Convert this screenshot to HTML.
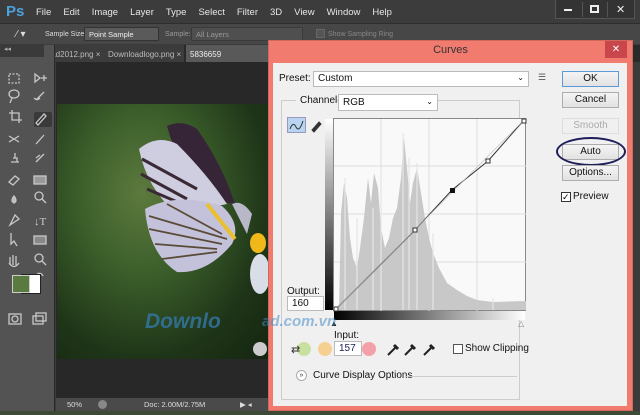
<!DOCTYPE html>
<html><head><style>
*{margin:0;padding:0;box-sizing:border-box}
body{width:640px;height:415px;overflow:hidden;background:#3b3b3b;font-family:"Liberation Sans",sans-serif;position:relative;font-size:9px;color:#ddd}
.a{position:absolute;white-space:nowrap}
.menu span{margin-right:12px;font-size:9.5px;color:#e6e6e6}
.btn{position:absolute;left:562px;width:57px;height:16px;border:1px solid #adadad;background:linear-gradient(#f4f4f4,#e2e2e2);font-size:10px;color:#111;text-align:center;line-height:14px}
</style></head><body>
<div class="a" style="left:0;top:0;width:640px;height:22px;background:#3c3c3c"></div>
<div class="a" style="left:6px;top:3px;font-size:15px;font-weight:bold;color:#4aa3dd">Ps</div>
<div class="a menu" style="left:36px;top:7px"><span>File</span><span>Edit</span><span>Image</span><span>Layer</span><span>Type</span><span>Select</span><span>Filter</span><span>3D</span><span>View</span><span>Window</span><span>Help</span></div>
<div class="a" style="left:555px;top:0;width:80px;height:19px;background:#333;border:1px solid #555;border-top:none"></div>
<div class="a" style="left:582px;top:2px;width:1px;height:15px;background:#555"></div>
<div class="a" style="left:607px;top:2px;width:1px;height:15px;background:#555"></div>
<div class="a" style="left:564px;top:9px;width:8px;height:2px;background:#eee"></div>
<div class="a" style="left:590px;top:5px;width:9px;height:8px;border:2px solid #eee"></div>
<div class="a" style="left:616px;top:3px;font-size:11px;color:#eee">✕</div>
<div class="a" style="left:0;top:23px;width:640px;height:21px;background:#474747;border-top:1px solid #2e2e2e"></div>
<div class="a" style="left:16px;top:29px;color:#ddd;font-size:10px">⁄ ▾</div>
<div class="a" style="left:45px;top:31px;font-size:7px;color:#ddd">Sample Size:</div>
<div class="a" style="left:84px;top:27px;width:75px;height:14px;background:#5a5a5a;border:1px solid #333;font-size:7.5px;padding:2px 4px;color:#eee">Point Sample</div>
<div class="a" style="left:165px;top:31px;font-size:7px;color:#999">Sample:</div>
<div class="a" style="left:191px;top:27px;width:112px;height:14px;background:#4f4f4f;border:1px solid #3a3a3a;font-size:7.5px;padding:2px 4px;color:#999">All Layers</div>
<div class="a" style="left:316px;top:29px;width:9px;height:9px;border:1px solid #666;background:#555"></div>
<div class="a" style="left:328px;top:31px;font-size:7px;color:#888">Show Sampling Ring</div>
<div class="a" style="left:0;top:45px;width:640px;height:17px;background:#2a2a2a"></div>
<div class="a" style="left:44px;top:45px;width:140px;height:17px;background:#3c3c3c"></div>
<div class="a" style="left:45px;top:50px;font-size:8px;color:#bbb">load2012.png ×</div>
<div class="a" style="left:108px;top:50px;font-size:8px;color:#bbb">Downloadlogo.png ×</div>
<div class="a" style="left:186px;top:45px;width:90px;height:17px;background:#595959"></div>
<div class="a" style="left:190px;top:50px;font-size:8px;color:#eee">5836659</div>
<div class="a" style="left:0;top:45px;width:55px;height:370px;background:#535353;border-right:1px solid #2a2a2a"></div>
<div class="a" style="left:0;top:45px;width:44px;height:12px;background:#3a3a3a;font-size:7px;color:#aaa;padding-left:4px">◂◂</div>
<div class="a" style="left:34px;top:112px;width:18px;height:15px;background:#3a3a3a;border-radius:2px"></div>
<svg class="a" style="left:0;top:60px" width="55" height="280" viewBox="0 0 55 280" fill="none" stroke="#c8c8c8" stroke-width="1.3">
<rect x="9" y="14" width="10" height="9" stroke-dasharray="2 1.5"/><path d="M35 14 l5 4 -5 4z M41 18 h6 M44 15 v6"/>
<ellipse cx="14" cy="34" rx="5" ry="4"/><path d="M12 38 l-2 5 M36 40 l8-8 M34 38 q3 3 6 0"/>
<path d="M12 50 v10 h10 M9 53 h10 v10"/><path d="M36 63 l8-9 2 2 -8 9z"/>
<path d="M9 76 l10 6 M9 82 l10-6 M36 84 l8-9"/>
<path d="M11 102 h8 M13 98 h4 v4 M15 93 v5 M36 102 l8-8 M36 98 l4-3"/>
<path d="M9 122 l6-6 4 3 -6 6z"/><rect x="34" y="116" width="12" height="8" fill="#999"/>
<path d="M14 136 q-4 5 0 7 q4-2 0-7z" fill="#bbb"/><circle cx="39" cy="136" r="4"/><path d="M42 139 l4 4"/>
<path d="M10 165 l5-10 4 4z"/><text x="34" y="165" fill="#ccc" stroke="none" font-size="11" font-family="Liberation Serif">↓T</text>
<path d="M11 173 v11 l3-3 3 5"/><rect x="34" y="176" width="12" height="8" fill="#888"/>
<path d="M10 205 v-8 M13 205 v-10 M16 205 v-9 M9 203 q5 7 10 0"/><circle cx="39" cy="198" r="4"/><path d="M42 201 l4 4"/>
<path d="M37 214 q4-2 6 2"/>
<rect x="9" y="254" width="12" height="10"/><circle cx="15" cy="259" r="3"/>
<rect x="33" y="256" width="10" height="8"/><rect x="36" y="253" width="10" height="8"/>
</svg>
<div class="a" style="left:21px;top:274px;width:20px;height:20px;background:#fff;border:1px solid #222"></div>
<div class="a" style="left:12px;top:275px;width:18px;height:18px;background:#5b7a3f;border:1px solid #ccc"></div>
<div class="a" style="left:56px;top:62px;width:214px;height:336px;background:#282828"></div>
<div class="a" style="left:57px;top:104px;width:212px;height:255px;background:radial-gradient(ellipse at 40% 35%,#5d7a3e 0%,#3b5e2a 35%,#1f3518 70%,#142510 100%)"></div>
<svg class="a" style="left:57px;top:104px" width="212" height="255">
<path d="M110 22 Q125 15 140 25 Q165 60 178 100 L150 95 Q120 60 110 22Z" fill="#362536"/>
<path d="M82 45 Q100 30 120 40 Q150 70 170 100 L120 110 Q90 85 82 45Z" fill="#cfcde0"/>
<path d="M85 55 L140 85 M84 70 L130 95 M90 85 L125 100" stroke="#3a2a35" stroke-width="3"/>
<path d="M88 105 Q120 88 165 102 Q185 120 175 140 Q150 170 120 168 Q92 150 88 105Z" fill="#c4c2da"/>
<path d="M92 112 L170 135 M92 125 L165 140 M98 140 L160 145 M105 155 L160 148 M110 100 L165 130" stroke="#5a4a38" stroke-width="1.8"/>
<path d="M150 100 L178 135" stroke="#e8c030" stroke-width="4"/>
<path d="M175 100 Q185 95 195 110 L190 130 Z" fill="#b8b8c8"/>
<ellipse cx="201" cy="139" rx="8" ry="10" fill="#f1b81a"/>
<ellipse cx="203" cy="170" rx="10" ry="20" fill="#d8dde8"/>
</svg>
<div class="a" style="left:145px;top:310px;font-size:21px;font-weight:bold;font-style:italic;color:rgba(50,120,170,.8)">Downlo</div>
<div class="a" style="left:56px;top:398px;width:214px;height:13px;background:#4a4a4a"></div>
<div class="a" style="left:67px;top:400px;font-size:7.5px;color:#ddd">50%</div>
<div class="a" style="left:98px;top:400px;width:9px;height:9px;border-radius:50%;background:#888"></div>
<div class="a" style="left:144px;top:400px;font-size:7.5px;color:#ddd">Doc: 2.00M/2.75M</div>
<div class="a" style="left:240px;top:400px;font-size:7.5px;color:#ddd">▶ ◂</div>
<div class="a" style="left:0;top:411px;width:640px;height:4px;background:#3d4a35"></div>
<div class="a" style="left:268px;top:40px;width:365px;height:371px;background:#f17b6e;border:1px solid #d0685c"></div>
<div class="a" style="left:268px;top:44px;width:365px;text-align:center;font-size:11px;color:#333">Curves</div>
<div class="a" style="left:605px;top:41px;width:22px;height:17px;background:#c9464c;color:#fff;text-align:center;font-size:10px;line-height:17px">✕</div>
<div class="a" style="left:273px;top:63px;width:354px;height:343px;background:#f0f0f0"></div>
<div class="a" style="left:279px;top:73px;font-size:10px;color:#111">Preset:</div>
<div class="a" style="left:313px;top:71px;width:216px;height:16px;background:#fff;border:1px solid #bbb;font-size:10px;color:#111;padding:1px 4px">Custom<span style="float:right;font-size:8px">⌄</span></div>
<div class="a" style="left:538px;top:72px;font-size:9px;color:#555">☰</div>
<div class="btn" style="top:71px;border-color:#5a9ad8">OK</div>
<div class="btn" style="top:92px">Cancel</div>
<div class="btn" style="top:118px;color:#aaa;border-color:#ddd;background:#f0f0f0">Smooth</div>
<div class="btn" style="top:144px">Auto</div>
<div class="a" style="left:556px;top:137px;width:70px;height:29px;border:2px solid #1e1e5a;border-radius:50%"></div>
<div class="btn" style="top:165px">Options...</div>
<div class="a" style="left:561px;top:192px;width:10px;height:10px;border:1px solid #333;background:#fff;font-size:9px;line-height:8px;color:#000">✓</div>
<div class="a" style="left:573px;top:191px;font-size:10px;color:#111">Preview</div>
<div class="a" style="left:281px;top:100px;width:239px;height:300px;border:1px solid #ccc"></div>
<div class="a" style="left:296px;top:95px;width:40px;height:12px;background:#f0f0f0;font-size:10px;color:#111;padding-left:4px">Channel:</div>
<div class="a" style="left:338px;top:94px;width:100px;height:17px;background:#fff;border:1px solid #bbb;font-size:10px;color:#111;padding:2px 4px">RGB<span style="float:right;font-size:8px">⌄</span></div>
<div class="a" style="left:287px;top:117px;width:19px;height:16px;background:#b8d4f0;border:1px solid #99b"></div>
<svg class="a" style="left:287px;top:117px" width="40" height="16" fill="none" stroke="#333" stroke-width="1"><path d="M3 12 q3-8 6-2 t7-6"/><path d="M25 13 l7-8 2 2 -7 8z" fill="#333"/></svg>
<div class="a" style="left:325px;top:119px;width:9px;height:191px;background:linear-gradient(#fff,#000)"></div>
<div class="a" style="left:334px;top:311px;width:191px;height:9px;background:linear-gradient(90deg,#000,#fff)"></div>
<svg class="a" style="left:333px;top:118px" width="194" height="194">
<rect x="0.5" y="0.5" width="192" height="192" fill="#f9f9f9" stroke="#888"/>
<path d="M48 1v192M96 1v192M144 1v192M1 48h192M1 96h192M1 144h192" stroke="#ddd"/>
<polygon fill="#c8c8c8" points="1,192 6,192 8,95 11,65 14,80 17,120 20,140 24,150 27,130 31,100 35,60 38,85 41,55 45,70 48,110 52,130 56,120 60,100 64,90 68,60 71,20 74,50 77,85 80,65 84,50 88,75 92,100 96,120 100,135 106,150 114,165 124,172 134,178 144,182 160,184 193,183 193,192"/>
<path d="M12 192V60M24 192V100M40 192V90M48 192V50M70 192V15M76 192V40M84 192V45M100 192V115M160 192V180" stroke="#e5e5e5" stroke-width="1.2"/>
<path d="M3 191 L82 112 L119 72 L155 43 L191 2" stroke="#333" fill="none" stroke-width="1"/>
<path d="M3 191 L191 2" stroke="#bbb" stroke-width=".6"/>
<rect x="80" y="110" width="4" height="4" fill="#fff" stroke="#333"/><rect x="117" y="70" width="5" height="5" fill="#111"/><rect x="153" y="41" width="4" height="4" fill="#fff" stroke="#333"/><rect x="189" y="1" width="4" height="4" fill="#fff" stroke="#333"/><rect x="1" y="189" width="4" height="4" fill="#fff" stroke="#333"/>
</svg>
<div class="a" style="left:287px;top:286px;font-size:10px;color:#111">Output:</div>
<div class="a" style="left:287px;top:296px;width:37px;height:15px;background:#fff;border:1px solid #bbb;font-size:10px;color:#111;padding:1px 4px">160</div>
<div class="a" style="left:330px;top:319px;font-size:8px;color:#111">▲</div>
<div class="a" style="left:518px;top:319px;font-size:8px;color:#888">△</div>
<div class="a" style="left:262px;top:313px;font-size:15px;font-weight:bold;font-style:italic;color:rgba(70,140,200,.55)">ad.com.vn</div>
<div class="a" style="left:334px;top:330px;font-size:10px;color:#111">Input:</div>
<div class="a" style="left:253px;top:342px;width:14px;height:14px;border-radius:50%;background:#ccc"></div>
<div class="a" style="left:297px;top:342px;width:14px;height:14px;border-radius:50%;background:#c8e0a0"></div>
<div class="a" style="left:318px;top:342px;width:14px;height:14px;border-radius:50%;background:#f5d090"></div>
<div class="a" style="left:334px;top:341px;width:28px;height:15px;background:#fff;border:1px solid #bbb;font-size:10px;color:#225;padding:1px 4px">157</div>
<div class="a" style="left:362px;top:342px;width:14px;height:14px;border-radius:50%;background:#f4a0a8"></div>
<div class="a" style="left:291px;top:343px;font-size:11px;color:#333">⇄</div>
<svg class="a" style="left:385px;top:341px" width="60" height="16" stroke="#222" stroke-width="2"><path d="M3 14 l8-8 M20 14 l8-8 M39 14 l8-8"/><path d="M9 4 l4 4 M26 4 l4 4 M45 4 l4 4" stroke-width="3"/></svg>
<div class="a" style="left:453px;top:344px;width:10px;height:10px;border:1px solid #555;background:#fff"></div>
<div class="a" style="left:465px;top:343px;font-size:10px;color:#111">Show Clipping</div>
<div class="a" style="left:296px;top:370px;width:11px;height:11px;border-radius:50%;border:1px solid #aaa;background:#fff;font-size:7px;text-align:center;line-height:10px;color:#333">»</div>
<div class="a" style="left:313px;top:370px;font-size:10px;color:#111">Curve Display Options</div>
<div class="a" style="left:405px;top:376px;width:112px;height:1px;background:#ccc"></div>
</body></html>
